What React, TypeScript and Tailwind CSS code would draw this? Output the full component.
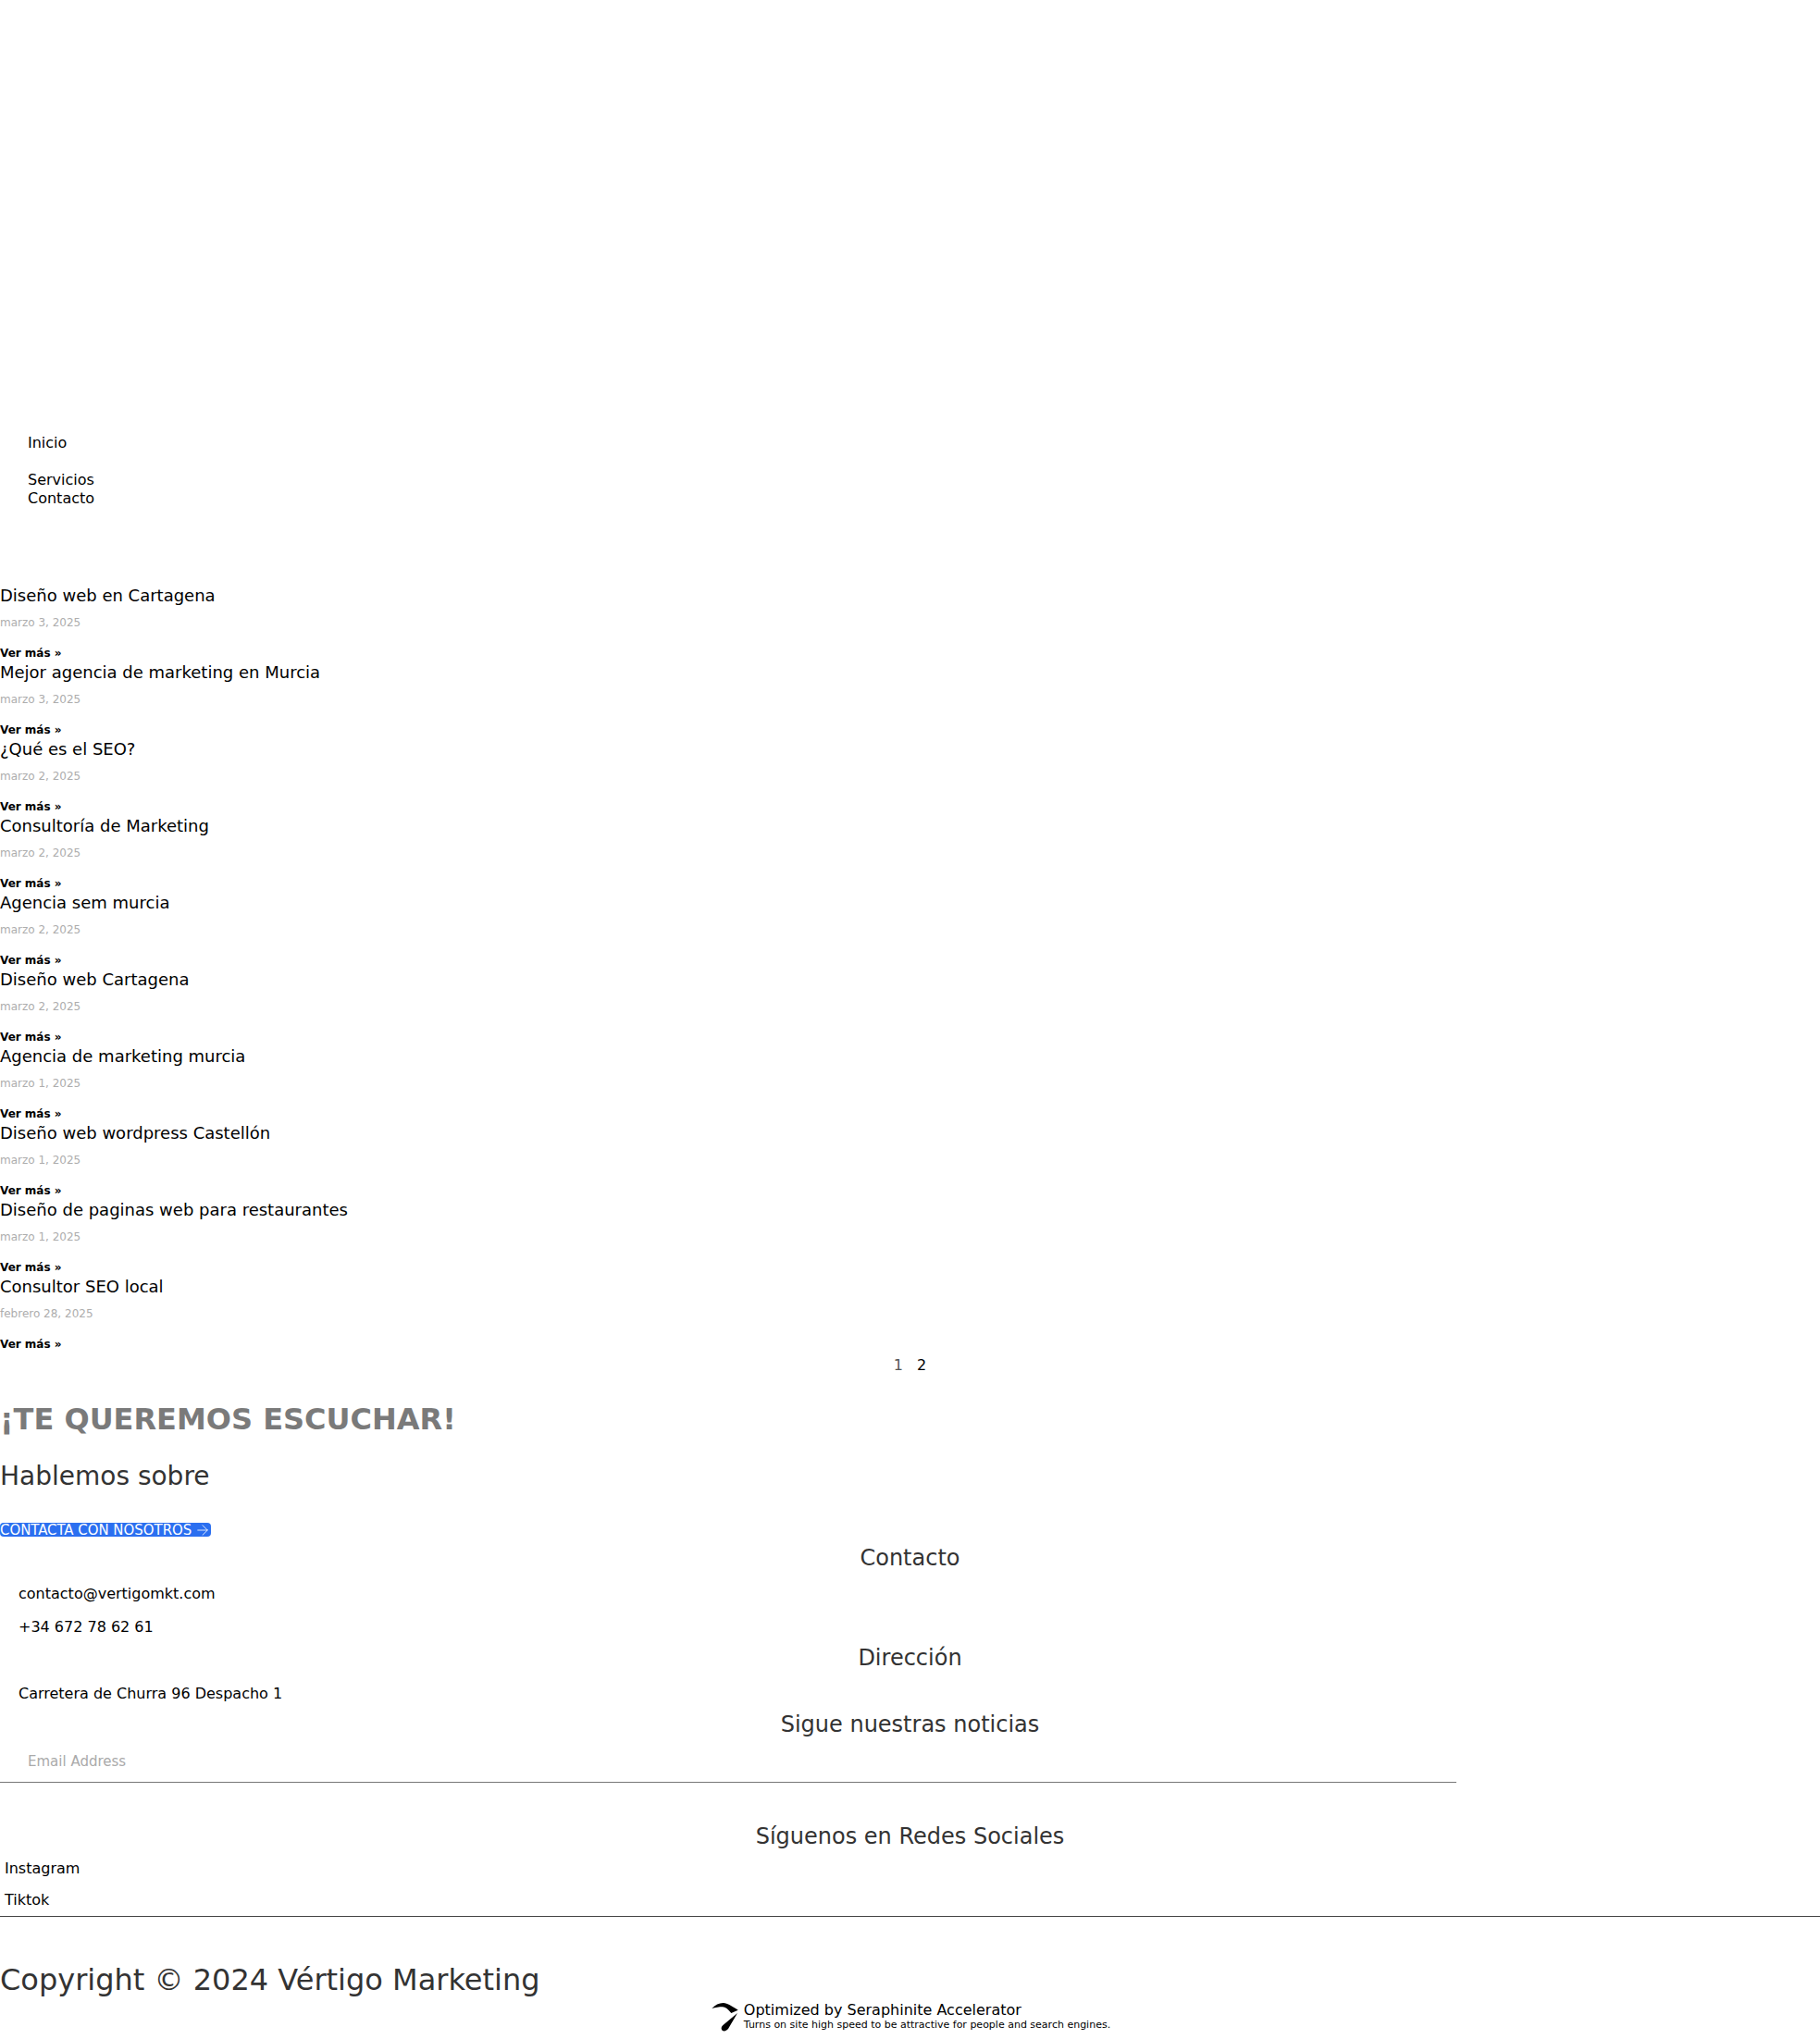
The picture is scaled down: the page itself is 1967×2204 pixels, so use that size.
import { ArrowRight } from "lucide-react"

const font = "font-['DejaVu_Sans',sans-serif]"

const posts = [
  { title: "Diseño web en Cartagena", date: "marzo 3, 2025" },
  { title: "Mejor agencia de marketing en Murcia", date: "marzo 3, 2025" },
  { title: "¿Qué es el SEO?", date: "marzo 2, 2025" },
  { title: "Consultoría de Marketing", date: "marzo 2, 2025" },
  { title: "Agencia sem murcia", date: "marzo 2, 2025" },
  { title: "Diseño web Cartagena", date: "marzo 2, 2025" },
  { title: "Agencia de marketing murcia", date: "marzo 1, 2025" },
  { title: "Diseño web wordpress Castellón", date: "marzo 1, 2025" },
  { title: "Diseño de paginas web para restaurantes", date: "marzo 1, 2025" },
  { title: "Consultor SEO local", date: "febrero 28, 2025" },
]

function Post({ title, date }: { title: string; date: string }) {
  return (
    <article className="h-[83px]">
      <h3 className="text-[18px] leading-[22px] text-black">{title}</h3>
      <p className="mt-[11px] text-[12px] leading-[14px] text-[#adadad]">{date}</p>
      <a className="mt-[19px] block text-[12px] font-bold leading-[14px] text-black">Ver más »</a>
    </article>
  )
}

function FooterTitle({ children }: { children: React.ReactNode }) {
  return <h4 className="text-center text-[24px] leading-[30px] text-[#333]">{children}</h4>
}

export default function App() {
  return (
    <div className={`${font} h-[2204px] overflow-hidden bg-white`}>
      <nav className="px-[30px] pt-[468px] text-[16px] text-black">
        <a className="block leading-[22px]">Inicio</a>
        <a className="mt-[19px] block leading-[20px]">Servicios</a>
        <a className="block leading-[20px]">Contacto</a>
      </nav>

      <section className="mt-[84px]">
        {posts.map((post) => (
          <Post key={post.title} {...post} />
        ))}
      </section>

      <div className="mt-[3px] flex justify-center gap-[15px] text-[16px] leading-[20px]">
        <span className="text-[#555]">1</span>
        <span className="text-black">2</span>
      </div>

      <h2 className="mt-[28px] text-[32px] font-bold leading-[40px] text-[#7a7a7a]">¡TE QUEREMOS ESCUCHAR!</h2>
      <p className="mt-[22px] text-[28px] leading-[40px] text-[#333]">Hablemos sobre</p>
      <a className="mt-[30px] flex h-[15px] w-[228px] items-center justify-between whitespace-nowrap rounded-[4px] bg-[#2b6ff0] text-[16.6px] leading-[15px] text-white [font-stretch:condensed]">
        CONTACTA CON NOSOTROS
        <ArrowRight className="size-[18px] shrink-0" strokeWidth={1.1} />
      </a>

      <div className="mt-[8px] w-full">
        <FooterTitle>Contacto</FooterTitle>
        <div className="mt-[14px] px-[20px] text-[16px] leading-[20px] text-black">
          <p>contacto@vertigomkt.com</p>
          <p className="mt-[16px]">+34 672 78 62 61</p>
        </div>
        <div className="mt-[8px]">
          <FooterTitle>Dirección</FooterTitle>
        </div>
        <p className="mt-[14px] px-[20px] text-[16px] leading-[20px] text-black">Carretera de Churra 96 Despacho 1</p>
        <div className="mt-[8px]">
          <FooterTitle>Sigue nuestras noticias</FooterTitle>
        </div>
        <div className="mt-[15px] w-[1574px] border-b border-[#777] px-[30px] pb-[12px] text-[15px] leading-[20px] text-[#aaa]">
          Email Address
        </div>
        <div className="mt-[43px]">
          <FooterTitle>Síguenos en Redes Sociales</FooterTitle>
        </div>
        <div className="mt-[10px] px-[5px] text-[16px] leading-[20px] text-black">
          <p>Instagram</p>
          <p className="mt-[14px]">Tiktok</p>
        </div>
      </div>

      <div className="mt-[7px] border-t border-[#444] pt-[48px]">
        <p className="text-[32px] leading-[40px] text-[#333]">Copyright © 2024 Vértigo Marketing</p>
      </div>

      <div className="mt-[4px] flex justify-center pl-[2px]">
        <div className="flex items-center gap-[5px]">
          <svg viewBox="0 0 30 32" className="h-[32px] w-[30px]">
            <path d="M0.3 7C4 3 8 1 12.7 1C17 1 23 5 28.7 8.7L21.3 12C18 8 15 5.3 12 5.3C8 5.3 4 5.8 0.3 7z" fill="#000" />
            <path d="M28 12L18 29C15.5 32 12 32 11 30C10 28 11 26 13 24.5z" fill="#000" />
          </svg>
          <div className="text-black">
            <p className="text-[16px] leading-[18px]">Optimized by Seraphinite Accelerator</p>
            <p className="text-[11px] leading-[14px]">Turns on site high speed to be attractive for people and search engines.</p>
          </div>
        </div>
      </div>
    </div>
  )
}
